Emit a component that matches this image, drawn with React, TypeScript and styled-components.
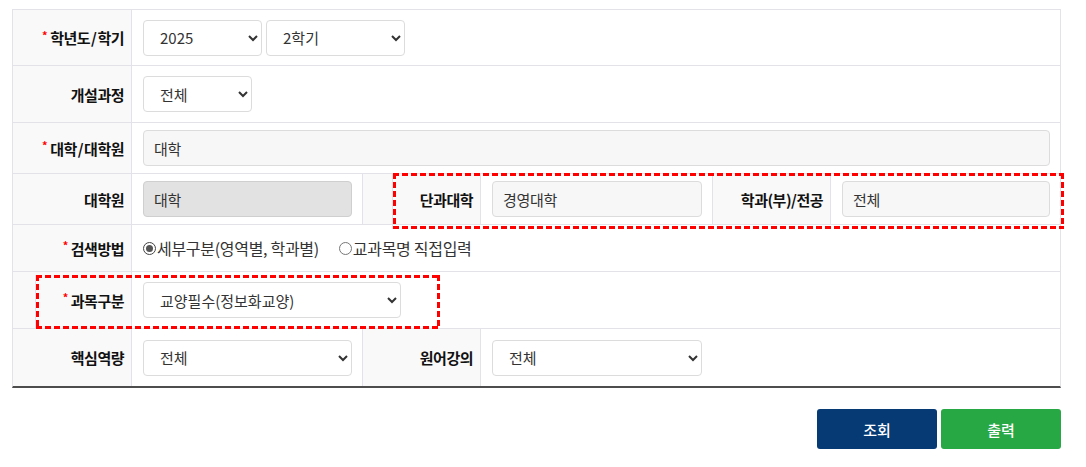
import React from 'react';
import styled, { createGlobalStyle, css } from 'styled-components';

const GlobalStyle = createGlobalStyle`
  * { box-sizing: border-box; }
  body {
    margin: 0;
    background: #fff;
    color: #333;
    font-family: "Noto Sans CJK KR", "Noto Sans", sans-serif;
  }
`;

const LINE = '#e2e2e8';
const SPLIT = '118px 231px 118px 232px 118px 1fr';

const Page = styled.div`
  padding: 9px 25px 0 12px;
`;

const FormTable = styled.div`
  border: 1px solid ${LINE};
  border-bottom: 2px solid #4d4d4d;
`;

const Row = styled.div<{ $h: number; $cols?: string; $last?: boolean }>`
  position: relative;
  display: grid;
  grid-template-columns: ${(p) => p.$cols || '118px 1fr'};
  height: ${(p) => p.$h}px;
  border-bottom: ${(p) => (p.$last ? 'none' : `1px solid ${LINE}`)};

  & > * + * {
    border-left: 1px solid ${LINE};
  }
`;

const Label = styled.div`
  display: flex;
  align-items: center;
  justify-content: flex-end;
  padding-right: 7px;
  background: #f9f9f9;
  color: #111;
  font-size: 15px;
  font-weight: 700;
  letter-spacing: -0.5px;
  white-space: nowrap;
`;

const Slash = styled.span`
  margin: 0 1px;
`;

const Req = styled.span`
  color: #f00;
  font-size: 11px;
  font-weight: 700;
  margin-right: 3px;
  position: relative;
  top: -3px;
`;

const Data = styled.div`
  display: flex;
  align-items: center;
  gap: 4px;
  padding: 0 10px 0 11px;
  background: #fff;
  font-size: 15px;
  letter-spacing: -0.5px;
  min-width: 0;
`;

const Select = styled.select<{ $w?: number }>`
  width: ${(p) => (p.$w ? `${p.$w}px` : '100%')};
  height: 36px;
  padding: 0 4px 0 12px;
  border: 1px solid #dcdcdc;
  border-radius: 4px;
  background: #fff;
  color: #333;
  font-family: inherit;
  font-size: 15px;
`;

const TextBox = styled.input<{ $disabled?: boolean }>`
  flex: 1;
  min-width: 0;
  height: 36px;
  padding: 0 10px;
  border: 1px solid ${(p) => (p.$disabled ? '#cfcfcf' : '#dcdcdc')};
  border-radius: 4px;
  background: ${(p) => (p.$disabled ? '#e2e2e2' : '#f7f7f7')};
  color: #333;
  font-family: inherit;
  font-size: 15px;
  letter-spacing: -0.3px;
`;

const RadioGroup = styled.div`
  display: flex;
  align-items: center;
  gap: 20px;
  color: #333;
  font-size: 16px;
  letter-spacing: -0.3px;
`;

const Option = styled.label`
  display: flex;
  align-items: center;
  white-space: nowrap;
`;

const RadioMark = styled.span<{ $on?: boolean }>`
  position: relative;
  width: 13px;
  height: 13px;
  margin-right: 1px;
  border-radius: 50%;
  border: 1px solid ${(p) => (p.$on ? '#444' : '#777')};
  background: #fff;
  ${(p) =>
    p.$on &&
    css`
      &::after {
        content: '';
        position: absolute;
        inset: 2px;
        border-radius: 50%;
        background: #555;
      }
    `}
`;

const dashes = (deg: number) =>
  `repeating-linear-gradient(${deg}deg, #f00 0 6px, transparent 6px 9px)`;

// red dotted annotation box laid over the form
const Highlight = styled.div<{ $x: number; $y: number; $w: number; $h: number }>`
  position: absolute;
  left: ${(p) => p.$x}px;
  top: ${(p) => p.$y}px;
  width: ${(p) => p.$w}px;
  height: ${(p) => p.$h}px;
  pointer-events: none;
  z-index: 2;
  background:
    ${dashes(90)} left top / 100% 3px no-repeat,
    ${dashes(90)} left bottom / 100% 3px no-repeat,
    ${dashes(180)} left top / 3px 100% no-repeat,
    ${dashes(180)} right top / 3px 100% no-repeat;
`;

const Actions = styled.div`
  display: flex;
  justify-content: flex-end;
  gap: 4px;
  margin-top: 21px;
`;

const Button = styled.button<{ $tone: 'navy' | 'green' }>`
  width: 120px;
  height: 40px;
  border: none;
  border-radius: 3px;
  background: ${(p) => (p.$tone === 'navy' ? '#063a74' : '#28a745')};
  color: #fff;
  font-family: inherit;
  font-size: 15px;
  font-weight: 500;
  cursor: pointer;
`;

const App: React.FC = () => {
  return (
    <>
      <GlobalStyle />
      <Page>
        <FormTable>
          <Row $h={56}>
            <Label><Req>*</Req>학년도<Slash>/</Slash>학기</Label>
            <Data>
              <Select $w={119} defaultValue="2025">
                <option>2025</option>
                <option>2024</option>
              </Select>
              <Select $w={139} defaultValue="2학기">
                <option>1학기</option>
                <option>2학기</option>
              </Select>
            </Data>
          </Row>

          <Row $h={57}>
            <Label>개설과정</Label>
            <Data>
              <Select $w={109}>
                <option>전체</option>
              </Select>
            </Data>
          </Row>

          <Row $h={51}>
            <Label><Req>*</Req>대학<Slash>/</Slash>대학원</Label>
            <Data>
              <TextBox readOnly value="대학" />
            </Data>
          </Row>

          <Row $h={51} $cols={SPLIT}>
            <Label>대학원</Label>
            <Data>
              <TextBox $disabled readOnly value="대학" />
            </Data>
            <Label>단과대학</Label>
            <Data>
              <TextBox readOnly value="경영대학" />
            </Data>
            <Label>학과(부)/전공</Label>
            <Data>
              <TextBox readOnly value="전체" />
            </Data>
            <Highlight $x={379} $y={-1} $w={672} $h={56} />
          </Row>

          <Row $h={47}>
            <Label><Req>*</Req>검색방법</Label>
            <Data>
              <RadioGroup>
                <Option><RadioMark $on />세부구분(영역별, 학과별)</Option>
                <Option><RadioMark />교과목명 직접입력</Option>
              </RadioGroup>
            </Data>
          </Row>

          <Row $h={57}>
            <Label><Req>*</Req>과목구분</Label>
            <Data>
              <Select $w={258}>
                <option>교양필수(정보화교양)</option>
              </Select>
            </Data>
            <Highlight $x={22} $y={3} $w={405} $h={54} />
          </Row>

          <Row $h={57} $cols={SPLIT} $last>
            <Label>핵심역량</Label>
            <Data>
              <Select>
                <option>전체</option>
              </Select>
            </Data>
            <Label>원어강의</Label>
            <Data>
              <Select>
                <option>전체</option>
              </Select>
            </Data>
          </Row>
        </FormTable>

        <Actions>
          <Button $tone="navy">조회</Button>
          <Button $tone="green">출력</Button>
        </Actions>
      </Page>
    </>
  );
};

export default App;
